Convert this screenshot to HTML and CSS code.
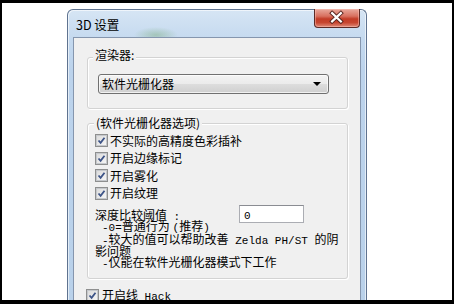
FILE: index.html
```html
<!DOCTYPE html>
<html lang="zh-CN">
<head>
<meta charset="utf-8">
<title>3D 设置</title>
<link rel="stylesheet" href="styles.css">
</head>
<body>
<div class="desk">
  <div class="window">
    <div class="titlebar">
      <span class="title">3D 设置</span>
      <span class="close">
        <svg width="46" height="19" viewBox="0 0 46 19">
          <path d="M18.5 5 L27.5 13.5 M27.5 5 L18.5 13.5" stroke="#5a2620" stroke-width="4.2" stroke-linecap="square" fill="none"/>
          <path d="M18.5 5 L27.5 13.5 M27.5 5 L18.5 13.5" stroke="#ffffff" stroke-width="2.2" stroke-linecap="square" fill="none"/>
        </svg>
      </span>
    </div>
    <div class="frame-body">
      <div class="client">
        <div class="group group-renderer">
          <div class="group-title">渲染器:</div>
          <div class="select">
            <span class="select-text">软件光栅化器</span>
            <span class="arrow"></span>
          </div>
        </div>

        <div class="group group-options">
          <div class="group-title">(软件光栅化器选项)</div>
          <ul class="checks">
            <li class="check"><span class="cb"><svg viewBox="0 0 9 9"><path d="M1.5 4.5 L3.6 6.8 L7.5 1.8" /></svg></span><span>不实际的高精度色彩插补</span></li>
            <li class="check"><span class="cb"><svg viewBox="0 0 9 9"><path d="M1.5 4.5 L3.6 6.8 L7.5 1.8" /></svg></span><span>开启边缘标记</span></li>
            <li class="check"><span class="cb"><svg viewBox="0 0 9 9"><path d="M1.5 4.5 L3.6 6.8 L7.5 1.8" /></svg></span><span>开启雾化</span></li>
            <li class="check"><span class="cb"><svg viewBox="0 0 9 9"><path d="M1.5 4.5 L3.6 6.8 L7.5 1.8" /></svg></span><span>开启纹理</span></li>
          </ul>
          <div class="depth-row">
            <span class="depth-label">深度比较阈值<span class="m"> :</span></span>
            <span class="input"><span class="m">0</span></span>
          </div>
          <div class="desc">
            <p class="line"><span class="m">-0=</span>普通行为 <span class="m">(</span>推荐<span class="m">)</span></p>
            <p class="line"><span class="m">-</span>较大的值可以帮助改善<span class="m"> Zelda PH/ST </span>的阴影问题</p>
            <p class="line"><span class="m">-</span>仅能在软件光栅化器模式下工作</p>
          </div>
        </div>

        <div class="check hack"><span class="cb"><svg viewBox="0 0 9 9"><path d="M1.5 4.5 L3.6 6.8 L7.5 1.8" /></svg></span><span>开启线<span class="m"> Hack</span></span></div>
        <div class="note">修正软件光栅化器中的线条图像，但是可能导致较慢</div>
      </div>
    </div>
  </div>
</div>
</body>
</html>
```
FILE: styles.css
```css
html, body {
  margin: 0;
  padding: 0;
}
body {
  width: 454px;
  height: 304px;
  overflow: hidden;
  background: #000;
  font-family: "Noto Sans CJK SC", "Noto Sans", sans-serif;
  font-size: 12px;
  color: #000;
}
.desk {
  margin: 3px 2px 0;
  height: 297px;
  box-sizing: border-box;
  padding: 6px 0 0 65px;
  background: #fff;
  overflow: hidden;
}
.window {
  width: 300px;
  height: 300px;
  box-sizing: border-box;
  border: 1px solid #5f7390;
  border-bottom: none;
  border-radius: 6px 6px 0 0;
  background:
    radial-gradient(ellipse 22px 8px at 88px 25px, rgba(120, 170, 120, 0.45), rgba(120, 170, 120, 0)),
    linear-gradient(#d6e5f4, #c4d9ef 30px, #bcd3ec 60px, #b9d1ea);
  box-shadow: inset 1px 1px 0 rgba(255, 255, 255, 0.6), inset -1px 0 0 rgba(255, 255, 255, 0.6);
}
.titlebar {
  height: 27px;
  display: flex;
  align-items: flex-start;
  padding: 0 6px 0 8px;
}
.title {
  padding-top: 7px;
  line-height: 16px;
  font-size: 12.5px;
  color: #000;
}
.close {
  margin-left: auto;
  margin-top: -1px;
  width: 46px;
  height: 19px;
  box-sizing: border-box;
  border: 1px solid #5c2a26;
  border-top: none;
  border-radius: 0 0 4px 4px;
  background: linear-gradient(#e9a99c, #d8705f 40%, #c23c27 55%, #c7452f 75%, #de8a78);
  box-shadow: inset 0 0 0 1px rgba(255, 200, 190, 0.45);
  display: flex;
  align-items: center;
  justify-content: center;
  overflow: hidden;
}
.close svg {
  display: block;
  margin-left: -1px;
  margin-top: -1px;
}
.frame-body {
  padding: 0 5px;
}
.client {
  height: 280px;
  border: 1px solid #8596ae;
  background: #f0f0f0;
  padding: 0 0 0 12px;
  overflow: hidden;
}
.group {
  width: 261px;
  box-sizing: border-box;
  margin-left: 1px;
  border: 1px solid #d3d3d3;
  border-radius: 3px;
  box-shadow: inset 1px 1px 0 #fff, 1px 1px 0 #fff;
}
.group-title {
  width: fit-content;
  background: #f0f0f0;
  line-height: 14px;
  padding: 0 2px;
}
.group-renderer {
  margin-top: 19px;
  padding: 0 0 14px 10px;
}
.group-renderer .group-title {
  margin: -10px 0 0 -5px;
}
.select {
  margin-top: 12px;
  width: 231px;
  height: 20px;
  box-sizing: border-box;
  border: 1px solid #707070;
  border-radius: 3px;
  background: linear-gradient(#f3f3f3, #ebebeb 50%, #dddddd 51%, #cfcfcf);
  box-shadow: inset 0 0 0 1px rgba(255, 255, 255, 0.7);
  display: flex;
  align-items: center;
  padding: 0 4px 0 3px;
}
.select-text {
  line-height: 18px;
}
.arrow {
  margin-left: auto;
  margin-right: 3px;
  width: 0;
  height: 0;
  border-left: 4px solid transparent;
  border-right: 4px solid transparent;
  border-top: 4px solid #000;
}
.group-options {
  margin-top: 14px;
  padding: 0 0 9px 7px;
}
.group-options .group-title {
  margin: -8px 0 0 -1px;
}
.checks {
  list-style: none;
  margin: 2px 0 0;
  padding: 0;
}
.check {
  height: 17.5px;
  display: flex;
  align-items: center;
  line-height: 14px;
  white-space: nowrap;
}
.cb {
  width: 13px;
  height: 13px;
  box-sizing: border-box;
  border: 1px solid #8e8f8f;
  background: #fff;
  margin-right: 2px;
  flex: none;
  display: flex;
  align-items: center;
  justify-content: center;
}
.cb svg {
  width: 9px;
  height: 9px;
  display: block;
  background: linear-gradient(135deg, #dcdcdc, #f5f5f5);
  outline: 1px solid #c5c8cc;
}
.cb path {
  fill: none;
  stroke: #3c5387;
  stroke-width: 1.8;
}
.depth-row {
  margin-top: 3px;
  height: 18px;
  display: flex;
  align-items: center;
}
.depth-label {
  width: 144px;
  padding-top: 3px;
  line-height: 14px;
}
.input {
  width: 65px;
  height: 18px;
  box-sizing: border-box;
  border: 1px solid #abadb3;
  border-top-color: #8a8c92;
  background: #fff;
  padding-left: 4px;
  line-height: 16px;
}
.m {
  font-family: "Liberation Mono", monospace;
  font-size: 11px;
}
.desc {
  margin-top: -2px;
  width: 248px;
}
.line {
  margin: 0;
  line-height: 10.5px;
  text-indent: 7px;
}
.hack {
  margin-top: 8px;
  height: 17px;
}
.hack .cb {
  margin-right: 3px;
}
.note {
  line-height: 14px;
  white-space: nowrap;
}
```
